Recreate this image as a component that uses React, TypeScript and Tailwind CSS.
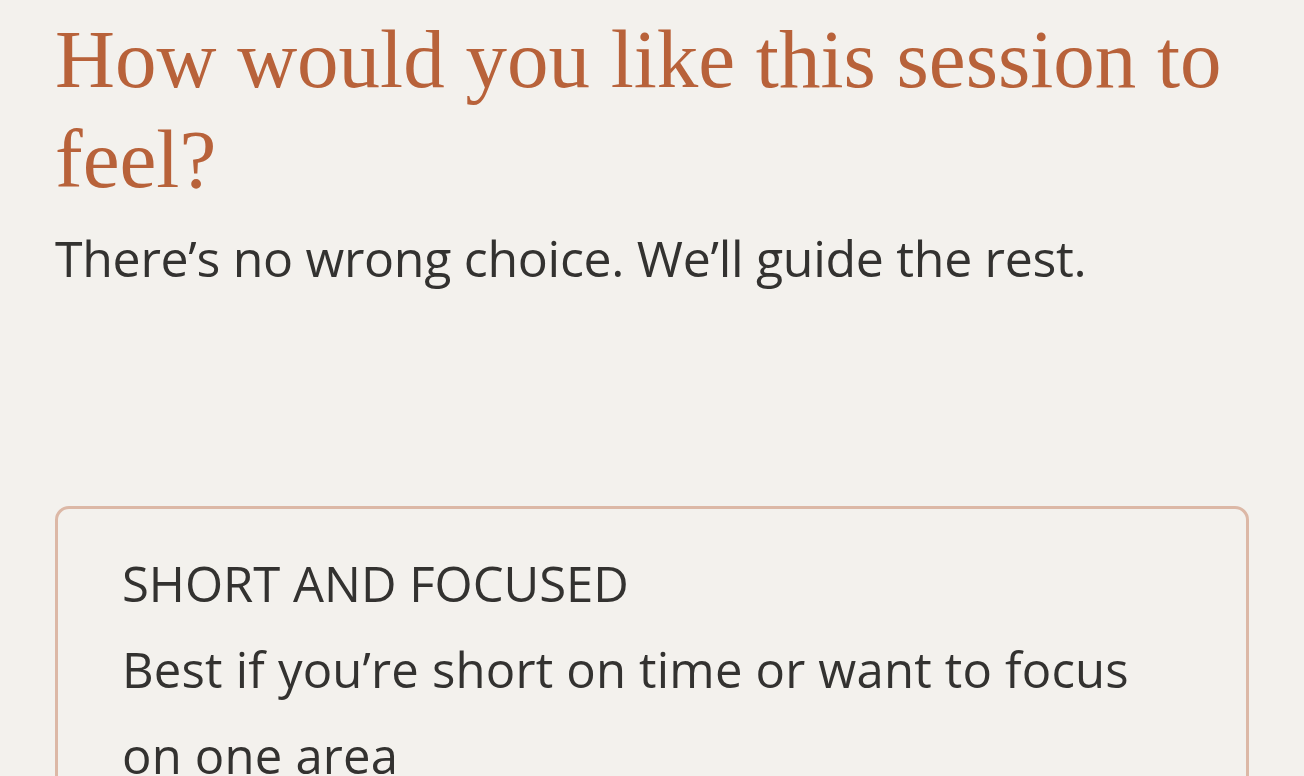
export default function App() {
  return (
    <div className="min-h-[776px] w-[1304px] overflow-hidden bg-[#f3f1ed] px-[55px] pt-[9px]">
      <h1 className="font-['Liberation_Serif',serif] text-[83px] leading-[100px] text-[#b8623a]">
        How would you like this session to feel?
      </h1>
      <p className="mt-[17px] font-['Open_Sans',sans-serif] text-[50px] leading-[64px] tracking-[-0.3px] text-[#333230]">
        There’s no wrong choice. We’ll guide the rest.
      </p>
      <div className="mt-[216px] h-[400px] rounded-[14px] border-[3px] border-[#dcb8a6] pl-[64px] pr-[64px] pt-[31px]">
        <div className="font-['Open_Sans',sans-serif] text-[49px] leading-[86px] text-[#333230]">SHORT AND FOCUSED</div>
        <div className="font-['Open_Sans',sans-serif] text-[49px] leading-[86px] tracking-[0.2px] text-[#333230]">
          Best if you’re short on time or want to focus on one area
        </div>
      </div>
    </div>
  );
}
